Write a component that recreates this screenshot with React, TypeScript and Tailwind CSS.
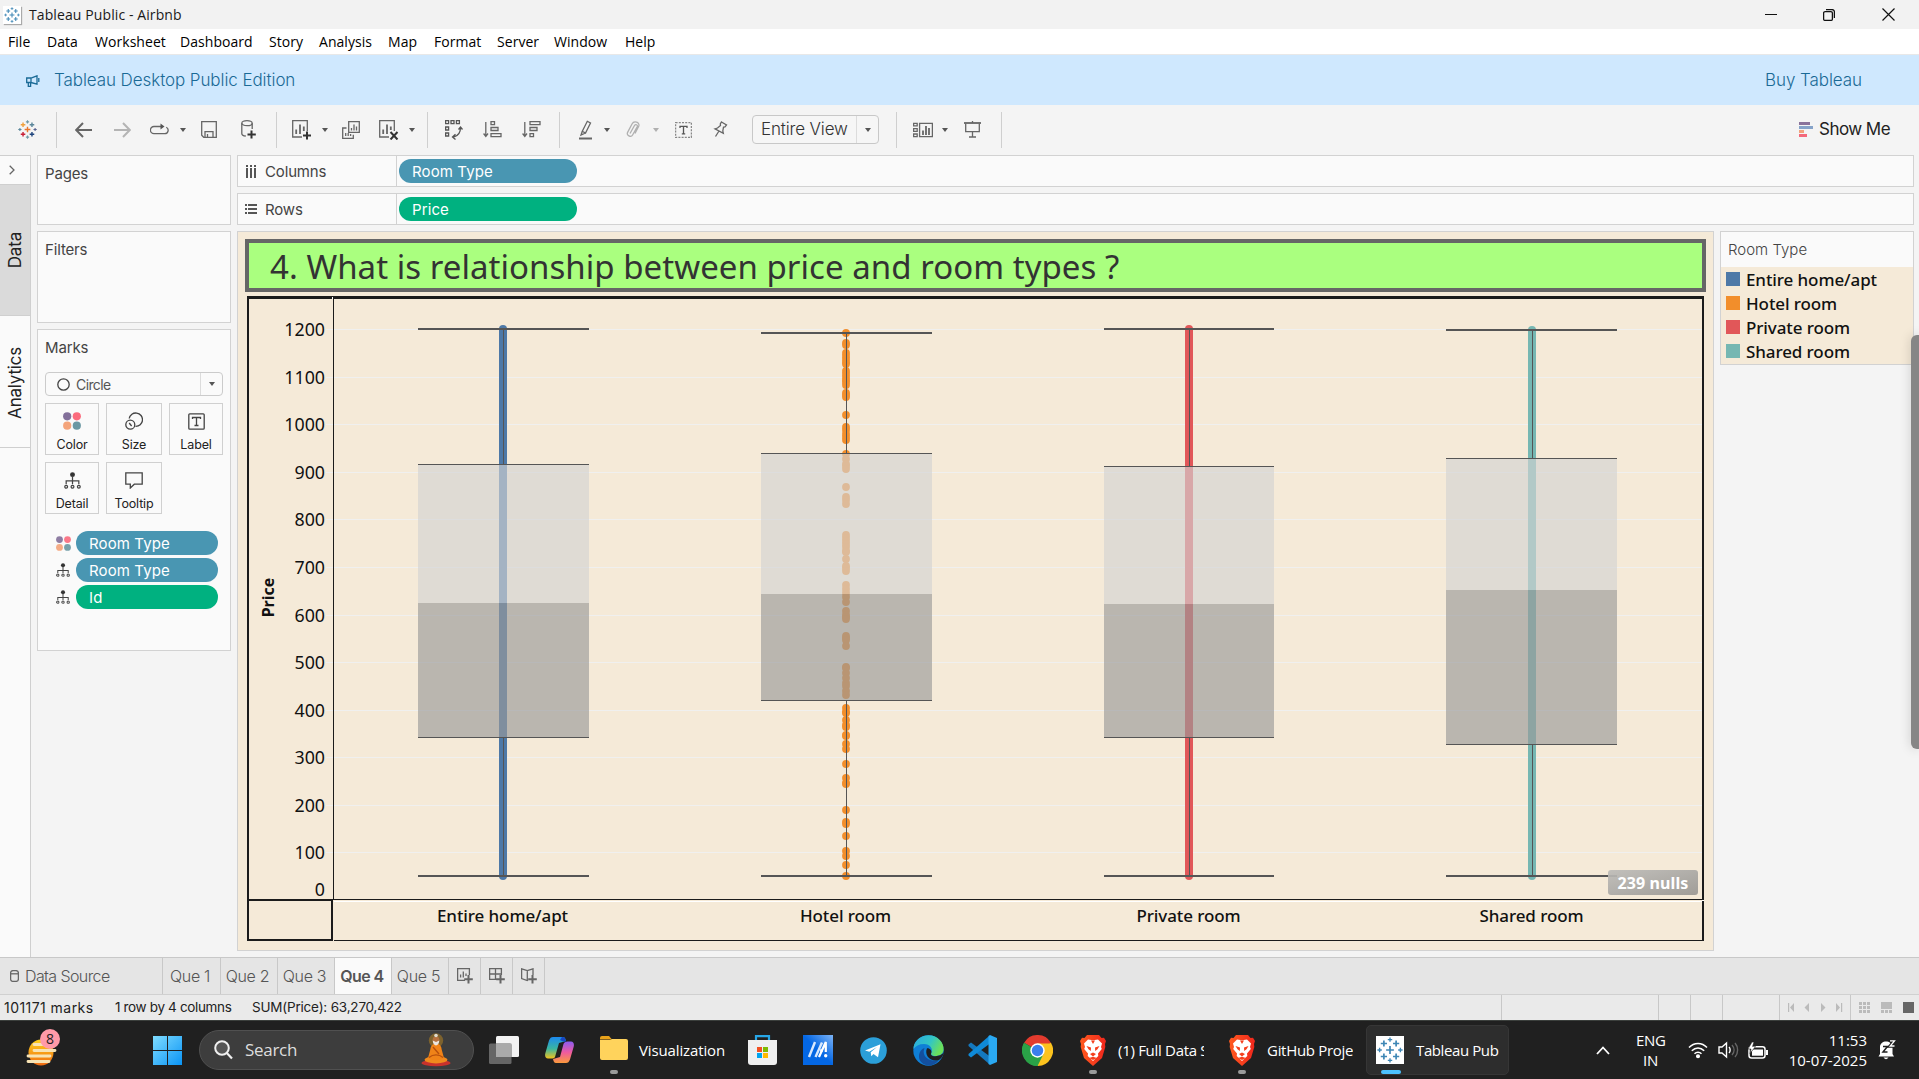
import React from "react";

const UI = "font-['Inter','Liberation_Sans',sans-serif]";
const SEGOE = "font-['Open_Sans','Noto_Sans',sans-serif]";
const NOTO = "font-['Noto_Sans','Open_Sans',sans-serif]";

const MENU: [string, string][] = [
  ["File", "w-[39px]"],
  ["Data", "w-[48px]"],
  ["Worksheet", "w-[85px]"],
  ["Dashboard", "w-[89px]"],
  ["Story", "w-[50px]"],
  ["Analysis", "w-[69px]"],
  ["Map", "w-[46px]"],
  ["Format", "w-[63px]"],
  ["Server", "w-[57px]"],
  ["Window", "w-[71px]"],
  ["Help", "w-[40px]"],
];

const ROOMS = [
  { name: "Entire home/apt", color: "#4e79a7", x: 503, bx: 418, bw: 171, top: 329, q3: 464.5, med: 603, q1: 737.5 },
  { name: "Hotel room", color: "#f28e2b", x: 846, bx: 761, bw: 171, top: 333, q3: 453.5, med: 594, q1: 700.5 },
  { name: "Private room", color: "#e15759", x: 1189, bx: 1104, bw: 170, top: 329, q3: 466.5, med: 604, q1: 737.5 },
  { name: "Shared room", color: "#76b7b2", x: 1532, bx: 1446, bw: 171, top: 330, q3: 458.5, med: 590, q1: 744.5 },
];

const HOTEL_DOTS = [
  333, 343, 345, 353, 356, 359, 362, 364, 371, 374, 377, 380, 382, 385, 393, 395, 397, 415, 427, 430, 434, 437, 440,
  454, 459, 464, 466, 469, 487, 497, 500, 504, 535, 538, 541, 544, 547, 551, 552, 559, 566, 568, 571, 585, 589, 593,
  597, 602, 611, 615, 617, 619, 636, 638, 640, 646, 667, 668, 673, 678, 683, 686, 691, 695, 708, 712, 713, 720, 725,
  727, 735, 736, 744, 749, 764, 778, 783, 784, 810, 822, 824, 836, 851, 856, 865, 876,
];

function Plus({ x, y, r, c, w = 1 }: { x: number; y: number; r: number; c: string; w?: number }) {
  return <path d={`M${x - r} ${y}H${x + r}M${x} ${y - r}V${y + r}`} stroke={c} strokeWidth={w} fill="none" />;
}

function TableauMark({ size, colors, w }: { size: number; colors: string[]; w: number }) {
  const [c, tl, tr, bl, br, n, e, s, wst] = colors;
  return (
    <svg width={size} height={size} viewBox="0 0 20 20" className="shrink-0">
      <Plus x={10} y={10} r={3} c={c} w={w} />
      <Plus x={5.3} y={5} r={2.4} c={tl} w={w} />
      <Plus x={14.7} y={5} r={2.4} c={tr} w={w} />
      <Plus x={5.3} y={15} r={2.4} c={bl} w={w} />
      <Plus x={14.7} y={15} r={2.4} c={br} w={w} />
      <Plus x={10} y={2} r={1.7} c={n} w={w * 0.8} />
      <Plus x={18} y={10} r={1.7} c={e} w={w * 0.8} />
      <Plus x={10} y={18} r={1.7} c={s} w={w * 0.8} />
      <Plus x={2} y={10} r={1.7} c={wst} w={w * 0.8} />
    </svg>
  );
}
const BLUE9 = Array(9).fill("#3f87b5");
const MULTI = ["#e8762d", "#f0a03c", "#5b879b", "#c72037", "#1f457e", "#7099a6", "#5b6591", "#7099a6", "#5b879b"];

function Ico({ w, h, children, c = "#666" }: { w: number; h: number; children: React.ReactNode; c?: string }) {
  return (
    <svg width={w} height={h} viewBox={`0 0 ${w} ${h}`} fill="none" stroke={c} strokeWidth={1.3} className="shrink-0">
      {children}
    </svg>
  );
}

function Caret({ c = "#555" }: { c?: string }) {
  return (
    <svg width="6" height="4" viewBox="0 0 6 4" className="shrink-0">
      <path d="M0 0H6L3 4Z" fill={c} />
    </svg>
  );
}

/* A toolbar cell: left gap class, then the drawing. */
function Tool({ m, children }: { m: string; children: React.ReactNode }) {
  return <div className={`flex shrink-0 items-center ${m}`}>{children}</div>;
}
function Sep({ m }: { m: string }) {
  return <div className={`h-9 w-px shrink-0 bg-[#cfcfcf] ${m}`} />;
}

function TitleBar() {
  return (
    <div className={`flex h-[29px] shrink-0 items-center bg-[#f2f2f2] ${SEGOE}`}>
      <div className="ml-[3px] flex h-[18px] w-[18px] items-center justify-center bg-white shadow-[1px_1px_1px_#aaa]">
        <TableauMark size={16} colors={BLUE9} w={1.3} />
      </div>
      <span className="ml-2 text-[14px] tracking-[0.1px] text-[#1a1a1a]">Tableau Public - Airbnb</span>
      <div className="ml-auto flex items-center">
        <Ico w={12} h={12} c="#111">
          <path d="M0 5.5H12" strokeWidth={1} />
        </Ico>
        <div className="ml-[46px] flex">
          <Ico w={12} h={12} c="#111">
            <rect x="0.6" y="2.6" width="8.8" height="8.8" rx="1.5" />
            <path d="M3 0.6H9a2.4 2.4 0 0 1 2.4 2.4V9" />
          </Ico>
        </div>
        <div className="mr-[24px] ml-[47px] flex">
          <Ico w={13} h={13} c="#111">
            <path d="M0.5 0.5L12.5 12.5M12.5 0.5L0.5 12.5" strokeWidth={1.2} />
          </Ico>
        </div>
      </div>
    </div>
  );
}

function Toolbar() {
  return (
    <div className={`flex h-[50px] shrink-0 items-center bg-[#f4f4f4] pb-px ${UI}`}>
      <Tool m="ml-[18px] w-[18px]">
        <TableauMark size={19} colors={MULTI} w={1.5} />
      </Tool>
      <Sep m="ml-5" />
      <Tool m="ml-[18px]">
        <Ico w={17} h={16}>
          <path d="M17 8H1.5M8 1L1.2 8L8 15" strokeWidth={2} />
        </Ico>
      </Tool>
      <Tool m="ml-[22px]">
        <Ico w={17} h={16} c="#b4b4b4">
          <path d="M0 8H15.5M9 1L15.8 8L9 15" strokeWidth={2} />
        </Ico>
      </Tool>
      <Tool m="ml-[19px]">
        <Ico w={19} h={14}>
          <path d="M11 3.5H4a3.4 3.4 0 0 0 0 7.2H14.5a3.4 3.4 0 0 0 1.8-6.4" />
          <path d="M10.5 0.5V6.5L14.5 3.5Z" fill="#555" stroke="none" />
        </Ico>
      </Tool>
      <Tool m="ml-[11px]">
        <Caret />
      </Tool>
      <Tool m="ml-[15px]">
        <Ico w={16} h={17}>
          <path d="M0.7 0.7H15.3V16.3H2.7L0.7 14.3ZM4 16V10.7H12V16M6.5 16v-3" />
        </Ico>
      </Tool>
      <Tool m="ml-6">
        <Ico w={16} h={19}>
          <ellipse cx="6" cy="3.2" rx="5.2" ry="2.5" />
          <path d="M0.8 3.2V13.5c0 1.5 1.5 2.4 4 2.5M11.2 3.2V9" />
          <path d="M10.5 10.5V18.5M6.5 14.5H14.8" stroke="#333" strokeWidth={2} />
        </Ico>
      </Tool>
      <Sep m="ml-[19px]" />
      <Tool m="ml-[15px]">
        <Ico w={20} h={20}>
          <path d="M10 17H0.7V0.7H15.3V11" />
          <path d="M4.2 14V9.5M8 14V4.5M11.8 11V6.5" strokeWidth={1.8} />
          <path d="M15 11.5V19.5M11 15.5H19" stroke="#333" strokeWidth={2} />
        </Ico>
      </Tool>
      <Tool m="ml-[10px]">
        <Caret />
      </Tool>
      <Tool m="ml-[14px]">
        <Ico w={18} h={18}>
          <path d="M6.7 0.7H17.3V11.3H6.7ZM4.5 7H0.7V17.3H11.3V13.8" />
          <path d="M9.5 9.5V7M12 9.5V3.5M14.5 9.5V5.5M3.7 15V12M6.2 15V12M8.6 15V13" />
        </Ico>
      </Tool>
      <Tool m="ml-[19px]">
        <Ico w={20} h={20}>
          <path d="M10 17H0.7V0.7H15.3V11" />
          <path d="M4.2 14V9.5M8 14V4.5M11.8 10V6.5" strokeWidth={1.8} />
          <path d="M11.5 12L18.5 19.5M18.5 12L11.5 19.5" stroke="#333" strokeWidth={2} />
        </Ico>
      </Tool>
      <Tool m="ml-[10px]">
        <Caret />
      </Tool>
      <Sep m="ml-3" />
      <Tool m="ml-[17px]">
        <Ico w={18} h={20} c="#555">
          <path d="M0.6 0.6h3v3h-3zM6 0.6h3v3h-3zM11.4 0.6h3v3h-3zM0.6 7h3v3h-3zM0.6 13h3v3h-3z" />
          <path d="M15.5 7.5c0 5-2 8.5-7 9.5M13.5 9.5L15.5 7L17.5 9.5M10.5 14.2L7.5 17L10.5 19.5" />
        </Ico>
      </Tool>
      <Tool m="ml-5">
        <Ico w={19} h={17}>
          <path d="M2.8 1V15M0.6 12.5L2.8 15.5L5 12.5" />
          <path d="M8 0.7h3.5v3H8zM8 6.5h7v3H8zM8 12.7h10v3H8z" />
        </Ico>
      </Tool>
      <Tool m="ml-5">
        <Ico w={19} h={17}>
          <path d="M2.8 1V15M0.6 12.5L2.8 15.5L5 12.5" />
          <path d="M8 0.7h10v3H8zM8 6.5h7v3H8zM8 12.7h3.5v3H8z" />
        </Ico>
      </Tool>
      <Sep m="ml-[18px]" />
      <Tool m="ml-[19px]">
        <Ico w={13} h={20}>
          <path d="M8.3 1.3L11.5 3L6.5 13L3.3 11.2ZM3.3 11.2L2 15L6.5 13" />
          <path d="M0 18.5H13" strokeWidth={2} />
        </Ico>
      </Tool>
      <Tool m="ml-3">
        <Caret />
      </Tool>
      <Tool m="ml-4">
        <Ico w={14} h={18} c="#b0b0b0">
          <path d="M4 12.5L8.5 4.5c1-1.8 3.5-.6 2.7 1.2L6.6 14c-1.5 2.8-6.6.6-5-2.6L6 3C7.8-.6 14 1 12.8 5L9 12.5" />
        </Ico>
      </Tool>
      <Tool m="ml-[13px]">
        <Caret c="#b0b0b0" />
      </Tool>
      <Tool m="ml-4">
        <Ico w={17} h={16} c="#888">
          <rect x="0.6" y="0.6" width="15.8" height="14.8" strokeDasharray="2 1.2" />
          <path d="M5 6V4.3H12V6M8.5 4.3V11.8M6.8 11.8H10.2" stroke="#555" />
        </Ico>
      </Tool>
      <Tool m="ml-[21px]">
        <Ico w={15} h={17}>
          <path d="M8.5 1L13.5 4L12 6L10.5 6.2L9.8 10L10.3 12.3L2 7.8L4.5 7L7.5 4.5L7.3 3ZM6 10L2.5 15.5" />
        </Ico>
      </Tool>
      <div className="ml-[24px] flex h-[29px] w-[127px] shrink-0 items-center rounded-sm border border-[#c8c8c8] bg-[#f6f6f6]">
        <span className="w-[103px] pl-2 text-[17px] font-light tracking-[-0.15px] text-[#333]">Entire View</span>
        <div className="flex h-full flex-1 items-center justify-center border-l border-[#dcdcdc]">
          <Caret />
        </div>
      </div>
      <Sep m="ml-[17px]" />
      <Tool m="ml-4">
        <Ico w={20} h={16}>
          <path d="M0.6 1.3h3.6v2.6H0.6zM0.6 6.6h3.6v2.8H0.6zM0.6 12h3.6v2.7H0.6zM6.6 1.3h12.8v13.4H6.6z" />
          <path d="M10 13V8.5M13 13V4M16 13V6" strokeWidth={1.8} />
        </Ico>
      </Tool>
      <Tool m="ml-[9px]">
        <Caret />
      </Tool>
      <Tool m="ml-4">
        <Ico w={17} h={17}>
          <path d="M8.5 0V2M1.7 2.5V10.7H15.3V2.5M8.5 11V16M5 16H12" />
          <path d="M0 2H17" strokeWidth={1.8} />
        </Ico>
      </Tool>
      <Sep m="ml-5" />
      <div className="mr-[29px] ml-auto flex items-center">
        <svg width="14" height="15" viewBox="0 0 14 15">
          <path d="M0 0H11V3H0Z" fill="#8a739b" />
          <path d="M0 4H14V7H0Z" fill="#86a3c9" />
          <path d="M0 8H5V11H0Z" fill="#f2a27c" />
          <path d="M0 12H8V15H0Z" fill="#f4697b" />
        </svg>
        <span className="ml-[6px] text-[17px] tracking-[-0.55px] text-[#222]">Show Me</span>
      </div>
    </div>
  );
}

function SideStrip() {
  return (
    <div className="flex w-[31px] shrink-0 flex-col border-t border-r border-[#cfcfcf] bg-[#fafafa] text-[17px] text-[#222]">
      <div className="flex h-[28px] items-center pl-[9px]">
        <Ico w={6} h={10}>
          <path d="M0.7 0.7L5 5L0.7 9.3" />
        </Ico>
      </div>
      <div className="flex h-[132px] items-center justify-center border-y border-[#cfcfcf] bg-[#dadada] pt-px pl-px">
        <span className="rotate-180 tracking-[-0.2px] [writing-mode:vertical-rl]">Data</span>
      </div>
      <div className="flex h-[132px] items-center justify-center border-b border-[#cfcfcf] pt-[3px] pl-px">
        <span className="rotate-180 tracking-[-0.2px] [writing-mode:vertical-rl]">Analytics</span>
      </div>
    </div>
  );
}

function Dots4({ s, o = 1 }: { s: number; o?: number }) {
  return (
    <svg width={s} height={s} viewBox="0 0 18 18" opacity={o} className="shrink-0">
      <circle cx="4.2" cy="4.3" r="4.1" fill="#83709a" />
      <circle cx="13.8" cy="4.3" r="4.1" fill="#fb6b7d" />
      <circle cx="4.2" cy="13.7" r="4.1" fill="#f4a47b" />
      <circle cx="13.8" cy="13.7" r="4.1" fill="#6b98a3" />
    </svg>
  );
}
function Tree({ s }: { s: number }) {
  return (
    <svg width={s} height={s} viewBox="0 0 18 18" fill="none" stroke="#444" strokeWidth={1.3} className="shrink-0">
      <circle cx="9" cy="2.8" r="2.6" fill="#333" stroke="none" />
      <path d="M9 4V13M2.3 13V9.5H15.7V13" />
      <circle cx="2.3" cy="15.6" r="1.5" />
      <circle cx="9" cy="15.6" r="1.5" />
      <circle cx="15.7" cy="15.6" r="1.5" />
    </svg>
  );
}

function MarkButton({ w, label, children }: { w: string; label: string; children: React.ReactNode }) {
  return (
    <div className={`flex h-[52px] flex-col items-center border border-[#d0d0d0] ${w}`}>
      <div className="mt-2 flex h-[18px] items-center">{children}</div>
      <span className="mt-[7px] text-[12.5px] leading-[16px] tracking-[-0.15px] text-[#222]">{label}</span>
    </div>
  );
}

function MarkPill({ icon, label, color }: { icon: React.ReactNode; label: string; color: string }) {
  return (
    <div className="flex items-center">
      <div className="flex w-[21px] items-center pl-px">{icon}</div>
      <div className={`flex h-6 w-[142px] items-center rounded-full pt-[2px] pl-[13px] text-[15px] tracking-[0.1px] text-white ${color}`}>{label}</div>
    </div>
  );
}

function CardsColumn() {
  const card = "border border-[#d2d2d2] bg-[#fafafa]";
  const head = "pl-[7px] text-[15px] leading-5 tracking-[-0.15px] text-[#444]";
  return (
    <div className="ml-[6px] flex w-[194px] shrink-0 flex-col gap-[6px]">
      <div className={`h-[70px] pt-2 ${card}`}>
        <div className={head}>Pages</div>
      </div>
      <div className={`h-[92px] pt-2 ${card}`}>
        <div className={head}>Filters</div>
      </div>
      <div className={`h-[322px] pt-2 ${card}`}>
        <div className={head}>Marks</div>
        <div className="mt-[14px] ml-[7px] flex h-6 w-[178px] items-center rounded-sm border border-[#cbcbcb]">
          <div className="flex w-[154px] items-center pl-[11px]">
            <Ico w={13} h={13} c="#444">
              <circle cx="6.5" cy="6.5" r="5.7" />
            </Ico>
            <span className="ml-[6px] text-[14px] tracking-[-0.6px] text-[#555]">Circle</span>
          </div>
          <div className="flex h-full flex-1 items-center justify-center border-l border-[#dcdcdc]">
            <Caret />
          </div>
        </div>
        <div className="mt-[7px] ml-[7px] flex w-[178px] flex-wrap gap-[7px]">
          <MarkButton w="w-[54px]" label="Color">
            <Dots4 s={18} />
          </MarkButton>
          <MarkButton w="w-[56px]" label="Size">
            <Ico w={18} h={18} c="#444">
              <path d="M4.2 6.5A6.7 6.7 0 1 1 10.5 14.4" />
              <circle cx="5.3" cy="12.7" r="4.5" />
              <path d="M4.2 11l2.4 3" />
            </Ico>
          </MarkButton>
          <MarkButton w="w-[54px]" label="Label">
            <Ico w={17} h={17} c="#444">
              <rect x="0.8" y="0.8" width="15.4" height="15.4" rx="1" />
              <path d="M4.5 6V4.5H12.5V6M8.5 4.5V12.5M6.5 12.5H10.5" />
            </Ico>
          </MarkButton>
          <MarkButton w="w-[54px]" label="Detail">
            <Tree s={17} />
          </MarkButton>
          <MarkButton w="w-[56px]" label="Tooltip">
            <Ico w={18} h={17} c="#444">
              <path d="M0.8 0.8H17.2V12.2H9.3L5.3 16V12.2H0.8Z" />
            </Ico>
          </MarkButton>
        </div>
        <div className="mt-[17px] ml-[17px] flex flex-col gap-[3px]">
          <MarkPill icon={<Dots4 s={15} o={0.9} />} label="Room Type" color="bg-[#4996b2]" />
          <MarkPill icon={<Tree s={14} />} label="Room Type" color="bg-[#4996b2]" />
          <MarkPill icon={<Tree s={14} />} label="Id" color="bg-[#00b180]" />
        </div>
      </div>
    </div>
  );
}

function Shelf({ icon, name, pill, color }: { icon: React.ReactNode; name: string; pill: string; color: string }) {
  return (
    <div className="flex h-8 w-[1677px] shrink-0 items-center border border-[#d2d2d2] bg-[#fafafa]">
      <div className="flex h-full w-[159px] items-center border-r border-[#d2d2d2] pl-[7px] text-[#444]">
        {icon}
        <span className="ml-[8px] pt-[2px] text-[15px] tracking-[-0.15px]">{name}</span>
      </div>
      <div className={`ml-[2px] flex h-6 w-[178px] items-center rounded-full pt-[2px] pl-[13px] text-[15px] tracking-[0.1px] text-white ${color}`}>{pill}</div>
    </div>
  );
}

function Chart() {
  const ticks = [100, 200, 300, 400, 500, 600, 700, 800, 900, 1000, 1100, 1200];
  const gy = (v: number) => Math.round(900 - v * 0.4757) + 0.5;
  return (
    <svg width="1458" height="646" viewBox="247 296 1458 646" className={NOTO} shapeRendering="crispEdges">
      {ticks.map((v) => (
        <path key={v} d={`M326 ${gy(v)}H1702`} stroke="#f0f0ef" />
      ))}
      <path d="M334 901.5H1702" stroke="#fff" />
      {ROOMS.map((r) => (
        <g key={r.name}>
          <g shapeRendering="auto" fill={r.color} stroke={r.color}>
            {r.name === "Hotel room" ? (
              HOTEL_DOTS.map((y, i) => <circle key={i} cx={r.x} cy={y} r={3.9} stroke="none" />)
            ) : (
              <path d={`M${r.x} ${r.top}V876`} strokeWidth={8} strokeLinecap="round" />
            )}
          </g>
          <path d={`M${r.x + 0.5} ${r.top}V${r.q3}M${r.x + 0.5} ${r.q1}V876`} stroke="#555" fill="none" />
          <rect x={r.bx} y={r.q3} width={r.bw} height={r.med - r.q3} fill="#d3d3d3" fillOpacity="0.65" />
          <rect x={r.bx} y={r.med} width={r.bw} height={r.q1 - r.med} fill="#999" fillOpacity="0.65" />
          <path d={`M${r.bx} ${r.q3}h${r.bw}M${r.bx} ${r.q1}h${r.bw}`} stroke="#555" />
          <path d={`M${r.bx} ${r.top}h${r.bw}M${r.bx} 876h${r.bw}`} stroke="#555" strokeWidth="2" />
          <text x={r.x - 0.5} y={922} textAnchor="middle" fontSize="17" fontWeight="500" letterSpacing="-0.1" fill="#111">
            {r.name}
          </text>
        </g>
      ))}
      <g stroke="#1b1b1b" fill="none">
        <path d="M248 297V941M1703 297V941" strokeWidth="2" />
        <path d="M247 297.5H1704" strokeWidth="3" />
        <path d="M333.5 299V900M334 899.5H1704M334 940.5H1704" />
        <path d="M247 900H332V941M247 940H332" strokeWidth="2" />
      </g>
      <path d="M332.5 297V299M1702 900.5h2" stroke="#fff" />
      <g fontSize="17.8" fill="#111" textAnchor="end">
        {ticks.map((v) => (
          <text key={v} x="325" y={gy(v) + 6.5}>
            {v}
          </text>
        ))}
        <text x="325" y="895.5">
          0
        </text>
      </g>
      <text transform="translate(273.5 597.5) rotate(-90)" textAnchor="middle" fontSize="16" fontWeight="700" fill="#111">
        Price
      </text>
    </svg>
  );
}

function Sheet() {
  return (
    <div className={`relative h-[720px] w-[1477px] shrink-0 border border-[#d2d2d2] bg-[#f5ead8] ${NOTO}`}>
      <div className="mt-[7px] ml-[7px] flex h-[53px] w-[1461px] items-center border-4 border-[#666] bg-[#aaff7f] pt-[2px] pl-[21px] text-[33px] leading-none tracking-[0.04px] whitespace-nowrap text-[#333]">
        <span>4. What is relationship between price and room types ?</span>
      </div>
      <div className="mt-1 ml-[9px] flex">
        <Chart />
      </div>
      <div className="absolute top-[638px] left-[1370px] flex h-[25px] w-[90px] items-center justify-center rounded-[3px] bg-gradient-to-br from-[#bcbbb8]/90 to-[#a09d98] text-[16px] font-bold tracking-[0.1px] text-white">
        239 nulls
      </div>
    </div>
  );
}

function Legend() {
  return (
    <div className="ml-[6px] flex h-[134px] w-[194px] shrink-0 flex-col border border-[#d2d2d2] bg-[#fafafa]">
      <div className="h-[35px] pt-[9px] pl-[7px] text-[15px] leading-[18px] font-light text-[#444]">Room Type</div>
      <div className={`flex-1 bg-[#f5ead8] ${NOTO}`}>
        {ROOMS.map((r) => (
          <div key={r.name} className="flex h-6 items-center pl-[5px]">
            <span className="h-[14px] w-[14px]" style={{ backgroundColor: r.color }} />
            <span className="ml-[6px] pt-[2px] text-[17px] leading-6 font-medium tracking-[-0.1px] text-[#111]">{r.name}</span>
          </div>
        ))}
      </div>
    </div>
  );
}

function SheetTabs() {
  const tab = "flex h-full items-center justify-center border-r border-[#c8c8c8]";
  return (
    <div className="flex h-[37px] shrink-0 items-center border-t border-[#c8c8c8] bg-[#e5e5e5] text-[16px] font-light tracking-[-0.3px] text-[#555]">
      <div className="flex h-full w-[163px] items-center border-r border-[#c8c8c8] pl-[10px]">
        <Ico w={9} h={12}>
          <rect x="0.6" y="0.6" width="7.8" height="10.8" rx="2.5" />
          <path d="M1 3.8h7" />
        </Ico>
        <span className="ml-[6px] tracking-[-0.6px]">Data Source</span>
      </div>
      <div className={`w-[58px] pr-[3px] ${tab}`}>Que 1</div>
      <div className={`w-[57px] pr-[3px] ${tab}`}>Que 2</div>
      <div className={`w-[57px] pr-[3px] ${tab}`}>Que 3</div>
      <div className={`w-[57px] bg-[#fafafa] pr-[2px] font-semibold tracking-[-0.6px] ${tab}`}>Que 4</div>
      <div className={`w-[57px] pr-[3px] ${tab}`}>Que 5</div>
      <div className={`w-8 ${tab}`}>
        <Ico w={16} h={16}>
          <path d="M8 12.4H0.6V0.6H12.4V7M3.6 9.5V6.5M6.3 9.5V3.5M9 8V5.5" />
          <path d="M11.5 7V15.5M7.2 11.3H15.8" strokeWidth={2} />
        </Ico>
      </div>
      <div className={`w-8 ${tab}`}>
        <Ico w={16} h={16}>
          <path d="M8 11.4H0.6V0.6H12.4V7M0.6 6H12.4M6.5 0.6V11.4" />
          <path d="M11.5 7V15.5M7.2 11.3H15.8" strokeWidth={2} />
        </Ico>
      </div>
      <div className={`w-8 ${tab}`}>
        <Ico w={16} h={16}>
          <path d="M7 12L6.3 12.5L0.6 10.5V0.8L6.3 2.5L12 0.8V7M6.3 2.5V12.5" />
          <path d="M11.5 7V15.5M7.2 11.3H15.8" strokeWidth={2} />
        </Ico>
      </div>
    </div>
  );
}

function StatusBar() {
  const cell = "h-full border-l border-[#c8c8c8]";
  return (
    <div className="flex h-[26px] shrink-0 items-center border-t border-[#d0d0d0] bg-[#eaeaea] text-[14px] whitespace-nowrap text-[#222]">
      <span className="ml-1 w-[111px] tracking-[0.45px]">101171 marks</span>
      <span className="w-[137px] text-[13.5px] tracking-[-0.35px]">1 row by 4 columns</span>
      <span className="text-[13.5px] tracking-[-0.2px]">SUM(Price): 63,270,422</span>
      <div className="ml-auto flex h-full">
        <div className={`w-[157px] ${cell}`} />
        <div className={`w-8 ${cell}`} />
        <div className={`w-8 ${cell}`} />
        <div className={`w-[57px] ${cell}`} />
        <div className={`flex w-[71px] items-center pl-2 ${cell}`}>
          <svg width="55" height="9" viewBox="0 0 55 9" fill="#bbb">
            <path d="M0 0H1.2V9H0ZM6 0V9L2 4.5ZM21 0V9L16.5 4.5ZM33 0V9L37.5 4.5ZM48 0V9L52 4.5ZM53 0H54.2V9H53Z" />
          </svg>
        </div>
        <div className={`flex w-[69px] items-center pl-2 ${cell}`}>
          <svg width="55" height="11" viewBox="0 0 55 11" fill="#bbb">
            <path d="M0 0h3v3H0zM4 0h3v3H4zM8 0h3v3H8zM0 4h3v3H0zM4 4h3v3H4zM8 4h3v3H8zM0 8h3v3H0zM4 8h3v3H4zM8 8h3v3H8z" />
            <path d="M22 0h11v7H22zM22 8h3v3h-3zM26 8h3v3h-3zM30 8h3v3h-3z" />
            <path d="M44 0h11v11H44z" fill="#666" />
          </svg>
        </div>
      </div>
    </div>
  );
}

function Brave() {
  return (
    <svg width="26" height="31" viewBox="0 0 26 31">
      <defs>
        <linearGradient id="brave" x1="0" x2="1">
          <stop offset="0" stopColor="#ff5a1f" />
          <stop offset="1" stopColor="#f0261c" />
        </linearGradient>
      </defs>
      <path d="M7 0H19L21.5 3L24 2.8L26 6L25 9L25.3 12L22 23L13 31L4 23L0.7 12L1 9L0 6L2 2.8L4.5 3Z" fill="url(#brave)" />
      <path d="M8 4.5L13 5.3L18 4.5L22 8.5L21 12L21.8 14L18 18.5L18.3 21L13 26L7.7 21L8 18.5L4.2 14L5 12L4 8.5Z" fill="#fff" />
      <path d="M6.5 11L11 12.5L10.8 16L8.5 14.2ZM19.5 11L15 12.5L15.2 16L17.5 14.2ZM10 19L13 17.5L16 19L13 21.5ZM11 5.5L13 9L15 5.5ZM9 23L13 21.8L17 23L13 25Z" fill="#f5401e" />
    </svg>
  );
}

function Taskbar() {
  return (
    <div className={`flex h-[59px] shrink-0 items-center border-t border-[#3b3f3c] bg-[#202020] text-white ${SEGOE}`}>
      <svg width="40" height="44" viewBox="0 0 40 44" className="ml-[24px]">
        <defs>
          <linearGradient id="sun" x1="0" y1="0" x2="0" y2="1">
            <stop offset="0" stopColor="#ffd21c" />
            <stop offset="1" stopColor="#ef6a12" />
          </linearGradient>
        </defs>
        <ellipse cx="17" cy="24.5" rx="12.5" ry="13" fill="url(#sun)" />
        <path d="M10 16.5H20M10 22.5H31M4 28H26M4 33.5H25" stroke="#f7e3b4" strokeWidth="2.8" strokeLinecap="round" />
        <circle cx="26" cy="11" r="10" fill="#ff9aa8" />
        <text x="26" y="16" textAnchor="middle" fontSize="14" fill="#222">
          8
        </text>
      </svg>
      <svg width="29" height="29" viewBox="0 0 29 29" className="ml-[89px]">
        <defs>
          <linearGradient id="win" x1="0" y1="0" x2="1" y2="1">
            <stop offset="0" stopColor="#7fdcff" />
            <stop offset="1" stopColor="#0a94f5" />
          </linearGradient>
        </defs>
        <path d="M0 0H14V14H0ZM15 0H29V14H15ZM0 15H14V29H0ZM15 15H29V29H15Z" fill="url(#win)" />
      </svg>
      <div className="ml-[17px] flex h-10 w-[275px] items-center rounded-full border border-[#505050] bg-[#3d3d3d]">
        <svg width="20" height="20" viewBox="0 0 20 20" className="ml-[14px]" fill="none" stroke="#f0f0f0">
          <circle cx="8" cy="8" r="6.8" strokeWidth="2" fill="#555" />
          <path d="M12.8 13L18 18.5" strokeWidth="2.2" />
        </svg>
        <span className="ml-[11px] text-[17px] tracking-[-0.3px] text-[#ddd]">Search</span>
        <svg width="30" height="34" viewBox="0 0 30 34" className="mr-[22px] ml-auto">
          <ellipse cx="15" cy="30" rx="14.5" ry="3.2" fill="#c8322c" />
          <ellipse cx="15" cy="26.8" rx="11.5" ry="3.6" fill="#f08a1d" />
          <circle cx="15" cy="7.5" r="7.2" fill="#7d622e" />
          <path d="M15 10C18.5 10.5 20.5 13 20.8 17L23 25C18 28 12 28 7 25L9.2 17C9.5 13 11.5 10.5 15 10Z" fill="#f08318" />
          <path d="M8 24.5C12 21 18 21 22 24.5M12 14L18 21" stroke="#b9500c" strokeWidth="1.4" fill="none" />
          <circle cx="15" cy="6.8" r="3.4" fill="#b5713f" />
          <path d="M11.7 7.5C12.2 14 17.8 14 18.3 7.5L15 9Z" fill="#ece6de" />
          <circle cx="15" cy="2.5" r="1.8" fill="#e0dccf" />
        </svg>
      </div>
      <svg width="30" height="28" viewBox="0 0 30 28" className="ml-[15px]">
        <rect x="7" y="0" width="23" height="21" rx="1.5" fill="#f3f3f3" />
        <rect x="0" y="7.5" width="22.5" height="20.5" rx="1.5" fill="#666" />
        <path d="M7 7.5H22.5V21H7Z" fill="#aaa" />
      </svg>
      <svg width="29" height="26" viewBox="0 0 29 26" className="ml-[26px]">
        <defs>
          <linearGradient id="cpA" x1="0" y1="0" x2="0" y2="1">
            <stop offset="0" stopColor="#1c8af0" />
            <stop offset="0.55" stopColor="#3bb6a0" />
            <stop offset="1" stopColor="#f2c21c" />
          </linearGradient>
          <linearGradient id="cpB" x1="0" y1="0" x2="0" y2="1">
            <stop offset="0" stopColor="#8b5cf2" />
            <stop offset="0.5" stopColor="#ee5aa0" />
            <stop offset="1" stopColor="#fb9a3c" />
          </linearGradient>
        </defs>
        <path d="M8 0H18C20 0 20.5 2 21 4L14 6L10 20C9.5 21 8 21.5 6 21.5H3C0.5 21.5 -0.5 19 0.4 16L4 3.5C5 1 6 0 8 0Z" fill="url(#cpA)" />
        <path d="M17 0C20 0 20.5 2 21 4.5H18L15 3Z" fill="#1746c2" />
        <path d="M21 26H11C9 26 8.5 24 8 22L15 20L18.5 7C19 5.5 20.5 4.5 22.5 4.5H26C28.5 4.5 29.5 7 28.6 10L25 22.5C24 25 23 26 21 26Z" fill="url(#cpB)" />
      </svg>
      <div className="relative ml-[26px] flex h-full items-center">
        <svg width="28" height="24" viewBox="0 0 28 24" className="-mt-1">
          <path d="M0 2Q0 0 2 0H9L12 3.5H0Z" fill="#e8a21a" />
          <path d="M0 4H10L12 3H26Q28 3 28 5V22Q28 24 26 24H2Q0 24 0 22Z" fill="#ffd35c" />
        </svg>
        <i className="absolute bottom-[5px] left-[10px] h-1 w-2 rounded-full bg-[#9a9a9a]" />
        <span className="ml-[11px] text-[15px] tracking-[-0.13px]">Visualization</span>
      </div>
      <svg width="29" height="30" viewBox="0 0 29 30" className="ml-[23px]">
        <path d="M8 7V1.2H21V7" stroke="#27a7e8" strokeWidth="2.2" fill="none" />
        <path d="M0 5H29V27Q29 30 26 30H3Q0 30 0 27Z" fill="#efefef" />
        <path d="M9 12H14V17H9Z" fill="#f25022" />
        <path d="M15 12H20V17H15Z" fill="#7fba00" />
        <path d="M9 18H14V23H9Z" fill="#00a4ef" />
        <path d="M15 18H20V23H15Z" fill="#ffb900" />
      </svg>
      <svg width="30" height="30" viewBox="0 0 30 30" className="ml-[26px]">
        <defs>
          <linearGradient id="my" x1="0" y1="1" x2="1" y2="0">
            <stop offset="0.5" stopColor="#0467e4" />
            <stop offset="1" stopColor="#7db4f6" />
          </linearGradient>
        </defs>
        <path d="M0 0H30V30H0Z" fill="url(#my)" />
        <path d="M6 22L12 7M12.5 22L19 7.5M17 15.5H20" stroke="#d8e8fd" strokeWidth="2.4" fill="none" />
        <path d="M16 22L22.8 7V17" stroke="#fff" strokeWidth="2.2" fill="none" />
        <circle cx="22.7" cy="20.7" r="1.7" fill="#fff" />
      </svg>
      <svg width="27" height="27" viewBox="0 0 27 27" className="ml-[27px]">
        <circle cx="13.5" cy="13.5" r="13.3" fill="#2b9fd9" />
        <path d="M5 13.5L20.5 7.3L18 20.3L13.5 17L11.3 19.2L10.7 15.2L17 10L9.3 14.8Z" fill="#fff" />
      </svg>
      <svg width="31" height="31" viewBox="0 0 31 31" className="ml-[26px]">
        <defs>
          <linearGradient id="edA" x1="0" y1="0" x2="1" y2="0.4">
            <stop offset="0" stopColor="#2aa8e0" />
            <stop offset="0.6" stopColor="#33c6c4" />
            <stop offset="1" stopColor="#6be05a" />
          </linearGradient>
        </defs>
        <circle cx="15.5" cy="15.5" r="15.2" fill="#0f7fd6" />
        <path d="M0.6 12C2 4.5 9 0.3 15.5 0.3C25 0.3 31 8 30.6 14.5C30.3 19 26.5 21 22.5 21C19 21 17.5 19.5 18.3 18C20.5 14 17 9 11 9C6 9 2.5 11 0.6 14Z" fill="url(#edA)" />
        <path d="M11.5 13C8.5 20 14 27 25.5 25.5C20 32.5 10 32 6.5 24.5C5 20 7 14.5 11.5 13Z" fill="#134f9e" />
        <path d="M18.3 18C17 20 19 21.3 22.5 21.2C26 21 28.5 19.8 31 17.5C30 21 28 24 25.5 25.3C17 27 11 20 14 13.2C17 13 19 15.5 18.3 18Z" fill="#202020" />
      </svg>
      <svg width="30" height="30" viewBox="0 0 30 30" className="ml-[24px]">
        <path d="M0.5 9.5L3 7.5L22 21.5V29L20.5 28.5L0.5 11Z" fill="#1478be" />
        <path d="M0.5 20.5L3 22.5L22 8.5V1L20.5 1.5L0.5 19Z" fill="#0f8ad8" />
        <path d="M22 0L29 3V27L22 30L20.5 29V1Z" fill="#2aa9f2" />
      </svg>
      <svg width="31" height="31" viewBox="0 0 31 31" className="ml-[24px]">
        <path d="M15.5 15.5L2.1 7.8A15.4 15.4 0 0 1 28.9 7.8Z" fill="#e33b2e" />
        <path d="M15.5 15.5L28.9 7.8A15.4 15.4 0 0 1 15.5 31Z" fill="#fcc31e" />
        <path d="M15.5 15.5L15.5 31A15.4 15.4 0 0 1 2.1 7.8Z" fill="#2aa147" />
        <path d="M15.5 8.5H29.3L22 19.5L15.5 31Z" fill="#fcc31e" />
        <path d="M2.1 7.8L9 19.5L15.5 22.5L21.5 19L15.5 31C4 31-3 18 2.1 7.8Z" fill="#2aa147" />
        <circle cx="15.5" cy="15.5" r="7.2" fill="#fff" />
        <circle cx="15.5" cy="15.5" r="5.7" fill="#3b7fee" />
      </svg>
      <div className="relative ml-[27px] flex h-full items-center">
        <Brave />
        <i className="absolute bottom-[5px] left-[9px] h-1 w-2 rounded-full bg-[#9a9a9a]" />
        <span className="ml-3 w-[86px] overflow-hidden text-[15px] tracking-[-0.3px] whitespace-nowrap">(1) Full Data S</span>
      </div>
      <div className="relative ml-[25px] flex h-full items-center">
        <Brave />
        <i className="absolute bottom-[5px] left-[9px] h-1 w-2 rounded-full bg-[#9a9a9a]" />
        <span className="ml-3 w-[86px] overflow-hidden text-[15px] tracking-[-0.3px] whitespace-nowrap">GitHub Proje</span>
      </div>
      <div className="relative ml-[13px] flex h-[50px] w-[143px] items-center rounded-[5px] border border-[#363636] bg-[#2d2d2d]">
        <div className="ml-[9px] flex h-7 w-7 items-center justify-center bg-white">
          <TableauMark size={26} colors={BLUE9} w={1.3} />
        </div>
        <i className="absolute bottom-0 left-[14px] h-1 w-5 rounded-full bg-[#4cc2ff]" />
        <span className="ml-3 text-[15px] tracking-[-0.4px] whitespace-nowrap">Tableau Pub</span>
      </div>
      <div className="ml-auto flex items-center">
        <Ico w={14} h={9} c="#fff">
          <path d="M1 8L7 1.5L13 8" strokeWidth={1.8} />
        </Ico>
        <div className="ml-[26px] w-[29px] text-center text-[15px] leading-[20px] tracking-[-0.3px]">
          <div>ENG</div>
          <div>IN</div>
        </div>
        <svg width="20" height="18" viewBox="0 0 20 18" className="ml-[23px]" fill="none" stroke="#fff" strokeWidth="1.5">
          <path d="M1 6.5C6 1 14 1 19 6.5M3.8 9.8C7.5 6 12.5 6 16.2 9.8M6.5 12.8C8.5 10.8 11.5 10.8 13.5 12.8" />
          <circle cx="10" cy="15.3" r="1.3" fill="#fff" />
        </svg>
        <svg width="21" height="18" viewBox="0 0 21 18" className="ml-[10px]" fill="none" stroke="#fff" strokeWidth="1.4">
          <path d="M1 6H4L8.5 2V16L4 12H1Z" />
          <path d="M11 6C12.5 7.5 12.5 10.5 11 12" />
          <path d="M14 4C16.7 7 16.7 11 14 14M17 2C20.5 6 20.5 12 17 16" stroke="#666" />
        </svg>
        <svg width="20" height="17" viewBox="0 0 20 17" className="ml-[9px]">
          <rect x="1" y="4.8" width="16" height="11.2" rx="2.5" fill="none" stroke="#fff" strokeWidth="1.5" />
          <rect x="4" y="7.5" width="11" height="6.2" fill="#fff" />
          <path d="M18 8H20V13H18Z" fill="#fff" />
          <path d="M4 0L0 7H3L2 11.5L7.5 4.5H4.5L6 0Z" fill="#fff" stroke="#202020" strokeWidth="0.6" />
        </svg>
        <div className="ml-[20px] w-[79px] text-right text-[15px] leading-[20px] whitespace-nowrap">
          <div>11:53</div>
          <div>10-07-2025</div>
        </div>
        <svg width="18" height="20" viewBox="0 0 18 20" className="mr-[23px] ml-[11px]">
          <path d="M2 14V7C2 3.5 5 1.5 8 1.5S14.5 3.5 14.5 7V14L16 16.5H0.5Z" fill="#fff" />
          <path d="M5.5 17.5H10.5Q8 21 5.5 17.5Z" fill="#fff" />
          <path d="M5 6.5H9.5L5 12H9.5" stroke="#202020" strokeWidth="1.5" fill="none" />
          <path d="M12 0.8H16.5L12.2 6H16.5" stroke="#202020" strokeWidth="3.4" fill="none" />
          <path d="M12 0.8H16.5L12.2 6H16.5" stroke="#fff" strokeWidth="1.3" fill="none" />
        </svg>
      </div>
    </div>
  );
}

export default function App() {
  return (
    <div className={`relative flex h-[1079px] w-full flex-col overflow-hidden bg-[#f4f4f4] ${UI}`}>
      <TitleBar />
      <div className={`flex h-[26px] shrink-0 items-center border-b border-[#e8e8e8] bg-white pl-2 text-[14px] tracking-[0.05px] text-black ${SEGOE}`}>
        {MENU.map(([m, w]) => (
          <span key={m} className={`shrink-0 ${w}`}>
            {m}
          </span>
        ))}
      </div>
      <div className="flex h-[50px] shrink-0 items-center bg-[#cfe8fe] pt-[2px] text-[17px] font-light tracking-[-0.08px] text-[#1a6a96]">
        <svg width="14" height="12" viewBox="0 0 14 12" className="ml-[26px]" fill="none" stroke="#1a6a96" strokeWidth="1.3">
          <path d="M0.7 3H5L11 0.8V9.2L5 7.5H0.7ZM5 3V7.5M2.3 7.5V11.3H4.6V7.5M12.8 3V7" />
        </svg>
        <span className="ml-[14px]">Tableau Desktop Public Edition</span>
        <span className="mr-[57px] ml-auto">Buy Tableau</span>
      </div>
      <Toolbar />
      <div className="flex h-[802px] shrink-0">
        <SideStrip />
        <CardsColumn />
        <div className="ml-[6px] flex flex-col gap-[6px]">
          <Shelf
            name="Columns"
            pill="Room Type"
            color="bg-[#4996b2]"
            icon={
              <svg width="12" height="13" viewBox="0 0 12 13" fill="#555">
                <path d="M1 0h2v2H1zM5 0h2v2H5zM9 0h2v2H9zM1 3h2v10H1zM5 3h2v10H5zM9 3h2v10H9z" />
              </svg>
            }
          />
          <Shelf
            name="Rows"
            pill="Price"
            color="bg-[#00b180]"
            icon={
              <svg width="12" height="12" viewBox="0 0 12 12" fill="#555">
                <path d="M0 1h2v2H0zM0 5h2v2H0zM0 9h2v2H0zM3 1h9v2H3zM3 5h9v2H3zM3 9h9v2H3z" />
              </svg>
            }
          />
          <div className="flex">
            <Sheet />
            <Legend />
          </div>
        </div>
      </div>
      <SheetTabs />
      <StatusBar />
      <Taskbar />
      <div className="absolute top-[335px] right-0 h-[414px] w-2 rounded-l-[6px] bg-[#868686] shadow-[0_0_12px_rgba(0,0,0,0.18)]" />
    </div>
  );
}
